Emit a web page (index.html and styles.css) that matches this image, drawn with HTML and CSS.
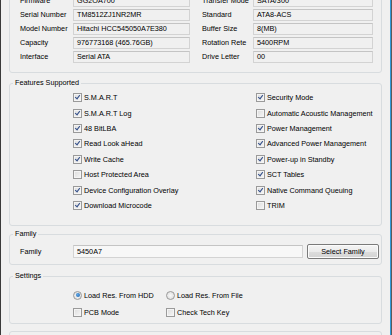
FILE: index.html
```html
<!DOCTYPE html>
<html>
<head>
<title>Drive Info</title>
<link rel="stylesheet" href="styles.css">
</head>
<body>
<div class="window">
  <div class="client">

    <fieldset class="group info">
      <div class="info-grid">
        <span class="lbl">Firmware</span><span class="field">GG2OA700</span>
        <span class="lbl right">Transfer Mode</span><span class="field">SATA/300</span>
        <span class="lbl">Serial Number</span><span class="field">TM8512ZJ1NR2MR</span>
        <span class="lbl right">Standard</span><span class="field">ATA8-ACS</span>
        <span class="lbl">Model Number</span><span class="field">Hitachi HCC545050A7E380</span>
        <span class="lbl right">Buffer Size</span><span class="field">8(MB)</span>
        <span class="lbl">Capacity</span><span class="field">976773168 (465.76GB)</span>
        <span class="lbl right">Rotation Rete</span><span class="field">5400RPM</span>
        <span class="lbl">Interface</span><span class="field">Serial ATA</span>
        <span class="lbl right">Drive Letter</span><span class="field">00</span>
      </div>
    </fieldset>

    <fieldset class="group features">
      <legend>Features Supported</legend>
      <div class="feature-grid">
        <label class="opt"><span class="check on"></span>S.M.A.R.T</label>
        <label class="opt"><span class="check on"></span>Security Mode</label>
        <label class="opt"><span class="check on"></span>S.M.A.R.T Log</label>
        <label class="opt"><span class="check"></span>Automatic Acoustic Management</label>
        <label class="opt"><span class="check on"></span>48 BitLBA</label>
        <label class="opt"><span class="check on"></span>Power Management</label>
        <label class="opt"><span class="check on"></span>Read Look aHead</label>
        <label class="opt"><span class="check on"></span>Advanced Power Management</label>
        <label class="opt"><span class="check on"></span>Write Cache</label>
        <label class="opt"><span class="check on"></span>Power-up in Standby</label>
        <label class="opt"><span class="check"></span>Host Protected Area</label>
        <label class="opt"><span class="check on"></span>SCT Tables</label>
        <label class="opt"><span class="check on"></span>Device Configuration Overlay</label>
        <label class="opt"><span class="check on"></span>Native Command Queuing</label>
        <label class="opt"><span class="check on"></span>Download Microcode</label>
        <label class="opt"><span class="check"></span>TRIM</label>
      </div>
    </fieldset>

    <fieldset class="group family">
      <legend>Family</legend>
      <div class="family-row">
        <span class="lbl">Family</span>
        <span class="field edit">5450A7</span>
        <button class="btn">Select Family</button>
      </div>
    </fieldset>

    <fieldset class="group settings">
      <legend>Settings</legend>
      <div class="settings-grid">
        <label class="opt"><span class="radio on"></span>Load Res. From HDD</label>
        <label class="opt"><span class="radio"></span>Load Res. From File</label>
        <label class="opt"><span class="check"></span>PCB Mode</label>
        <label class="opt"><span class="check"></span>Check Tech Key</label>
      </div>
    </fieldset>

    <fieldset class="group more"></fieldset>

  </div>
  <div class="frame-right"></div>
</div>
</body>
</html>
```

FILE: styles.css
```css
body {
  margin: 0;
  background-color: #f0f0f0;
  font-family: "Liberation Sans", Arial, sans-serif;
  font-size: 7.25px;
  color: #000;
}
.window {
  display: flex;
  height: 335px;
  overflow: hidden;
  border-left: 1px solid #3a3a3a;
}
.client {
  flex: 1;
  padding: 0 8px;
}
.frame-right {
  width: 1px;
  background-color: #3398d8;
  border-right: 1px solid #5a5a5a;
}

/* group boxes */
.group {
  margin: 0;
  padding: 0;
  min-width: 0;
  border: 1px solid #d8dcdf;
  border-radius: 3px;
}
.group legend {
  margin-left: 3px;
  padding: 0 2px;
  line-height: 10px;
}

/* drive info */
.info {
  margin-top: -20px;
}
.info-grid {
  display: grid;
  grid-template-columns: 53px 117px 63px 120px;
  row-gap: 2px;
  padding: 14px 0 9px 10px;
}
.lbl {
  line-height: 12px;
  white-space: nowrap;
}
.lbl.right {
  padding-left: 12px;
}
.field {
  height: 10px;
  line-height: 10px;
  padding-left: 3px;
  border: 1px solid #d3d3d3;
  border-top-color: #c4c4c4;
  background-color: #f0f0f0;
  white-space: nowrap;
  overflow: hidden;
}

/* features */
.features {
  margin-top: 5px;
}
.feature-grid {
  display: grid;
  grid-template-columns: 183px 1fr;
  grid-auto-rows: 15.4px;
  padding: 2px 0 12px 63px;
}
.opt {
  display: flex;
  align-items: center;
  gap: 2px;
  white-space: nowrap;
}
.check {
  width: 7px;
  height: 7px;
  border: 1px solid #9a9a9a;
  background: linear-gradient(135deg, #dcdcdc, #f6f6f6);
  box-shadow: inset 0 0 0 1px #f4f4f4;
  position: relative;
}
.check.on::after {
  content: "";
  position: absolute;
  left: 2px;
  top: 0px;
  width: 2px;
  height: 4px;
  border: solid #34508a;
  border-width: 0 1.3px 1.3px 0;
  transform: rotate(38deg);
}

/* family */
.family {
  margin-top: 3px;
}
.family-row {
  display: grid;
  grid-template-columns: 53px 230px 76px;
  align-items: center;
  height: 15px;
  padding: 5px 2px 5px 10px;
}
.field.edit {
  height: 11px;
  line-height: 11px;
  background-color: #f7f7f7;
}
.btn {
  height: 15px;
  margin-left: 4px;
  padding: 0;
  font: inherit;
  color: #000;
  border: 1px solid #7a7a7a;
  border-radius: 2px;
  background: linear-gradient(#f4f4f4 0%, #ebebeb 50%, #dddddd 51%, #d3d3d3 100%);
  box-shadow: inset 0 0 0 1px #fbfbfb;
}

/* settings */
.settings {
  margin-top: 6px;
}
.settings-grid {
  display: grid;
  grid-template-columns: 93px 1fr;
  grid-auto-rows: 12px;
  row-gap: 5px;
  padding: 8px 0 5px 63px;
}
.radio {
  width: 7px;
  height: 7px;
  border: 1px solid #9a9a9a;
  border-radius: 50%;
  background: radial-gradient(circle, #f8f8f8, #dadada);
  position: relative;
}
.radio.on::after {
  content: "";
  position: absolute;
  left: 1.5px;
  top: 1.5px;
  width: 4px;
  height: 4px;
  border-radius: 50%;
  background: radial-gradient(circle at 40% 40%, #5fa8e8, #1a5fa8);
}

.more {
  margin-top: 7px;
  height: 30px;
}
```
